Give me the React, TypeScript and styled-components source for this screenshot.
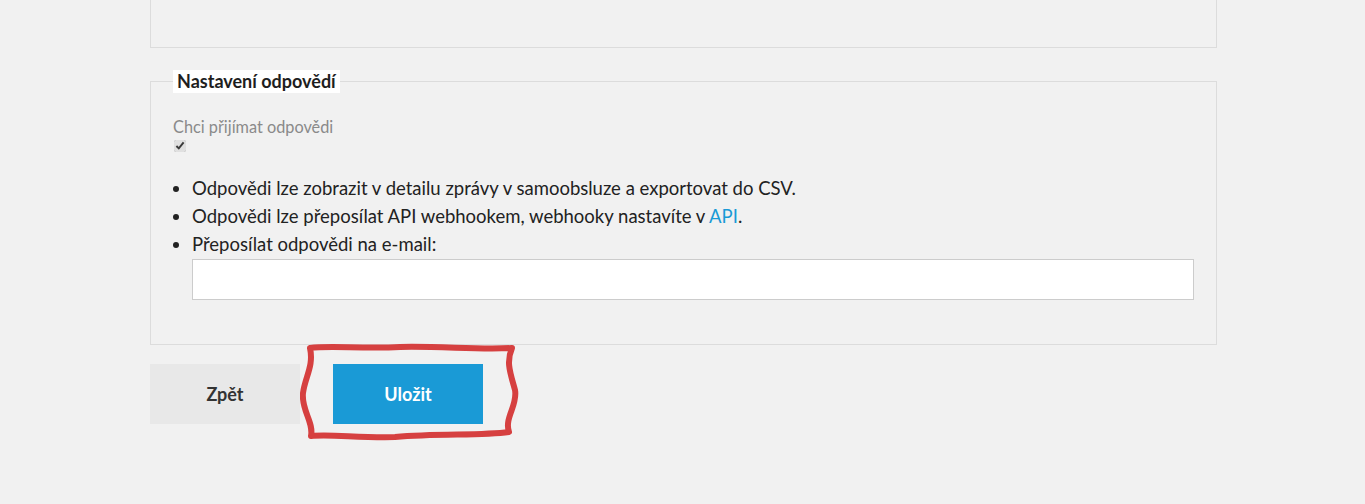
import React from 'react';
import styled, { createGlobalStyle } from 'styled-components';

const GlobalStyle = createGlobalStyle`
  html, body {
    margin: 0;
    padding: 0;
    background: #f1f1f1;
    font-family: Lato, "Open Sans", sans-serif;
    color: #222;
  }
`;

const Page = styled.div`
  width: 1067px;
  margin-left: 150px;
  height: 504px;
`;

const TopBox = styled.div`
  height: 47px;
  border: 1px solid #dcdcdc;
  border-top: none;
`;

const Fieldset = styled.fieldset`
  margin: 22px 0 0;
  padding: 24px 22px 44px;
  border: 1px solid #dcdcdc;
`;

const Legend = styled.legend`
  background: #fff;
  padding: 1px 4px;
  font-size: 18px;
  font-weight: 700;
  line-height: 21px;
  color: #1e1e1e;
`;

const Label = styled.div`
  font-size: 16.3px;
  color: #8a8a8a;
  line-height: 20px;
`;

const Check = styled.input`
  margin: 3px 0 0 1px;
  width: 12px;
  height: 12px;
  accent-color: #e0e0e0;
  display: block;
`;

const List = styled.ul`
  margin: 22px 0 0;
  padding-left: 19px;
  font-size: 18.5px;
  line-height: 28px;
`;

const Link = styled.a`
  color: #1a9ad6;
  text-decoration: none;
`;

const EmailInput = styled.input`
  display: block;
  box-sizing: border-box;
  width: 100%;
  height: 41px;
  margin-top: 1px;
  border: 1px solid #cccccc;
  background: #fff;
`;

const Actions = styled.div`
  position: relative;
  display: flex;
  gap: 33px;
  margin-top: 19px;
`;

const Button = styled.button<{ primary?: boolean }>`
  width: 150px;
  height: 60px;
  border: none;
  font-family: Lato, "Open Sans", sans-serif;
  font-size: 18px;
  font-weight: 700;
  background: ${p => (p.primary ? '#1a9ad6' : '#e8e8e8')};
  color: ${p => (p.primary ? '#fff' : '#333')};
`;

const Scribble = styled.svg`
  position: absolute;
  left: 150px;
  top: -22px;
  width: 225px;
  height: 100px;
  pointer-events: none;
`;

export default function App() {
  return (
    <>
      <GlobalStyle />
      <Page>
        <TopBox />
        <Fieldset>
          <Legend>Nastavení odpovědí</Legend>
          <Label>Chci přijímat odpovědi</Label>
          <Check type="checkbox" defaultChecked />
          <List>
            <li>Odpovědi lze zobrazit v detailu zprávy v samoobsluze a exportovat do CSV.</li>
            <li>
              Odpovědi lze přeposílat API webhookem, webhooky nastavíte v <Link href="#">API</Link>.
            </li>
            <li>
              Přeposílat odpovědi na e-mail:
              <EmailInput type="text" />
            </li>
          </List>
        </Fieldset>
        <Actions>
          <Button>Zpět</Button>
          <Button primary>Uložit</Button>
          <Scribble viewBox="300 342 225 100">
            <path
              d="M310 348 C330 345, 360 349, 400 347 C440 346, 480 350, 512 348 C 506 362, 510 372, 515 390 C 518 405, 504 418, 509 432 C 480 436, 440 433, 395 437 C 360 438, 330 434, 311 436 C 314 422, 301 410, 303 393 C 305 377, 314 366, 310 348 Z"
              fill="none"
              stroke="#d64040"
              strokeWidth="6"
              strokeLinejoin="round"
            />
          </Scribble>
        </Actions>
      </Page>
    </>
  );
}
